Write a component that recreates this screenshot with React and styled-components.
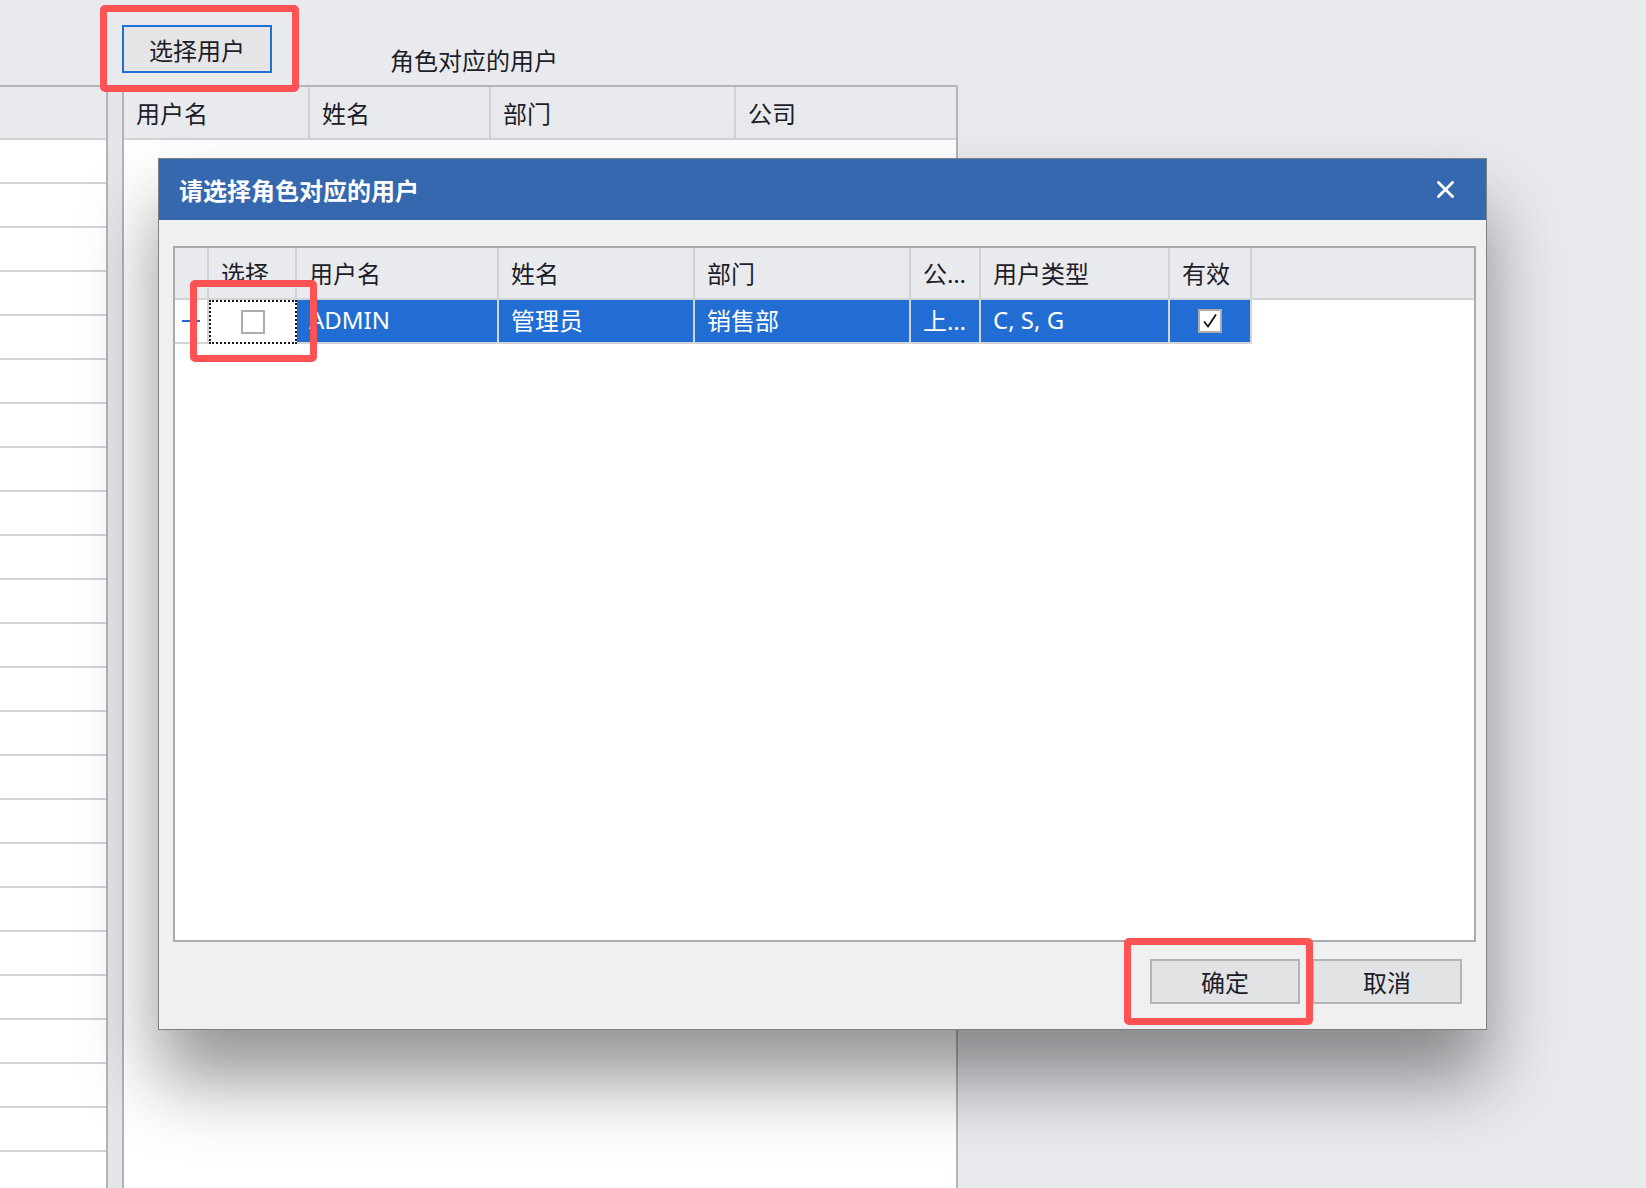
import React from "react";
import styled, { createGlobalStyle } from "styled-components";

const GlobalStyle = createGlobalStyle`
  html, body { margin: 0; padding: 0; }
  body {
    background: #e9eaee;
    font-family: "Noto Sans", "Noto Sans CJK SC", sans-serif;
  }
  *, *::before, *::after { box-sizing: border-box; }
`;

/* ---------- background window ---------- */

const Screen = styled.div`
  position: relative;
  width: 1646px;
  height: 1188px;
  overflow: hidden;
  background: #e9eaee;
  display: flex;
  flex-direction: column;
  color: #1d1d2a;
  font-size: 24px;
`;

const TopBar = styled.div`
  height: 85px;
  flex: none;
  display: flex;
  align-items: flex-start;
  padding-left: 122px;
`;

const PickButton = styled.button`
  margin-top: 25px;
  width: 150px;
  height: 48px;
  padding: 0;
  border: 2px solid #1f6fd8;
  background: #e5e5e7;
  color: #1d1d2a;
  font-family: inherit;
  font-size: 24px;
`;

const RoleLabel = styled.div`
  margin-left: 118px;
  margin-top: 49px;
  line-height: 24px;
  font-size: 24px;
  white-space: nowrap;
`;

const Workspace = styled.div`
  flex: 1;
  min-height: 0;
  display: flex;
  align-items: stretch;
`;

const SidePanel = styled.div`
  width: 106px;
  flex: none;
  background: #fff;
  border-top: 2px solid #b5b6b9;
  display: flex;
  flex-direction: column;
  overflow: hidden;
`;

const PanelHead = styled.div`
  height: 53px;
  flex: none;
  background: #e9eaed;
  border-bottom: 2px solid #d2d3d6;
`;

const PanelRow = styled.div`
  height: 44px;
  flex: none;
  border-bottom: 2px solid #d2d3d6;
`;

const Splitter = styled.div`
  width: 18px;
  flex: none;
  background: #e5e6ea;
  border-left: 2px solid #b3b4b7;
  border-right: 2px solid #b3b4b7;
`;

const MemberGrid = styled.div`
  width: 834px;
  flex: none;
  background: #fff;
  border-top: 2px solid #b5b6b9;
  border-right: 2px solid #b3b4b7;
  display: flex;
  flex-direction: column;
`;

const MemberHead = styled.div`
  height: 53px;
  display: grid;
  grid-template-columns: 186px 181px 245px 1fr;
  background: #e9eaed;
  border-bottom: 2px solid #d2d3d6;
`;

const MemberHeadCell = styled.div`
  display: flex;
  align-items: center;
  padding-left: 12px;
  border-right: ${(p) => (p.$last ? "none" : "2px solid #d2d3d6")};
  font-size: 24px;
  white-space: nowrap;
`;

/* ---------- dialog ---------- */

const Dialog = styled.div`
  position: absolute;
  left: 158px;
  top: 158px;
  width: 1329px;
  height: 872px;
  border: 1px solid #7e7f83;
  background: #f0f0f0;
  box-shadow: 0 50px 70px rgba(0, 0, 0, 0.42);
  display: flex;
  flex-direction: column;
  z-index: 2;
`;

const TitleBar = styled.div`
  height: 61px;
  flex: none;
  background: #3568ae;
  display: flex;
  align-items: center;
  justify-content: space-between;
  padding: 0 32px 0 20px;
`;

const Title = styled.div`
  color: #fff;
  font-size: 24px;
  font-weight: 700;
  white-space: nowrap;
`;

const CloseIcon = styled.svg`
  width: 17px;
  height: 17px;
  display: block;
`;

const DialogBody = styled.div`
  flex: 1;
  display: flex;
  flex-direction: column;
  padding: 26px 10px 25px 14px;
`;

const UserGrid = styled.div`
  height: 696px;
  flex: none;
  background: #fff;
  border: 2px solid #ababad;
  display: flex;
  flex-direction: column;
`;

const GridRow = styled.div`
  display: grid;
  grid-template-columns: 34px 88px 202px 196px 216px 70px 189px 82px 1fr;
  height: ${(p) => p.$height}px;
  flex: none;
`;

const HeadCell = styled.div`
  display: flex;
  align-items: center;
  min-width: 0;
  padding: 0 10px 1px 12px;
  background: #e9eaed;
  border-bottom: 2px solid #d2d3d6;
  border-right: ${(p) => (p.$filler ? "none" : "2px solid #d2d3d6")};
  font-size: 24px;
`;

const CellText = styled.span`
  display: block;
  min-width: 0;
  overflow: hidden;
  white-space: nowrap;
  text-overflow: ellipsis;
`;

const DataCell = styled.div`
  display: flex;
  align-items: center;
  justify-content: ${(p) => (p.$center ? "center" : "flex-start")};
  min-width: 0;
  padding: ${(p) => (p.$center ? "0" : "0 10px 4px 12px")};
  font-size: 24px;
  background: ${(p) => (p.$selected ? "#216dd4" : "#fff")};
  color: ${(p) => (p.$selected ? "#fff" : "#1d1d2a")};
  border-bottom: 2px solid #d3d4d7;
  border-right: 2px solid #d3d4d7;
`;

const FocusCell = styled.div`
  display: flex;
  align-items: center;
  justify-content: center;
  background: #fff;
  border: 2px dotted #1a1a1a;
`;

const RowHeadCell = styled.div`
  display: flex;
  align-items: center;
  background: #fff;
  border-bottom: 2px solid #d3d4d7;
  border-right: 2px solid #d3d4d7;
`;

const CurrentMark = styled.span`
  display: block;
  margin-left: 7px;
  width: 18px;
  height: 2px;
  background: #2069d2;
`;

const Filler = styled.div`
  background: #fff;
`;

const CheckBox = styled.span`
  width: 24px;
  height: 24px;
  flex: none;
  background: #fff;
  border: 2px solid #acacae;
  display: flex;
  align-items: center;
  justify-content: center;
`;

const Footer = styled.div`
  display: flex;
  justify-content: flex-end;
  gap: 12px;
  padding: 17px 14px 0 0;
`;

const DialogButton = styled.button`
  width: 150px;
  height: 45px;
  padding: 0;
  border: 2px solid #b4b4b6;
  background: #e2e3e5;
  color: #1d1d2a;
  font-family: inherit;
  font-size: 24px;
`;

/* ---------- annotation frames ---------- */

const Callout = styled.div`
  position: absolute;
  border: 7px solid #fd5354;
  border-radius: 5px;
  pointer-events: none;
  z-index: 5;
`;

const users = [
  {
    login: "ADMIN",
    name: "管理员",
    dept: "销售部",
    corp: "上海分公司",
    kind: "C, S, G",
    valid: true,
  },
];

function Tick() {
  return (
    <svg width="18" height="18" viewBox="0 0 18 18">
      <polyline
        points="3,9.5 7,14.5 15,2.5"
        fill="none"
        stroke="#111"
        strokeWidth="1.8"
        strokeLinejoin="miter"
      />
    </svg>
  );
}

export default function App() {
  const sideRows = Array.from({ length: 23 });
  const headers = ["选择", "用户名", "姓名", "部门", "公司", "用户类型", "有效"];

  return (
    <>
      <GlobalStyle />
      <Screen>
        <TopBar>
          <PickButton>选择用户</PickButton>
          <RoleLabel>角色对应的用户</RoleLabel>
        </TopBar>

        <Workspace>
          <SidePanel>
            <PanelHead />
            {sideRows.map((_, i) => (
              <PanelRow key={i} />
            ))}
          </SidePanel>
          <Splitter />
          <MemberGrid>
            <MemberHead>
              <MemberHeadCell>用户名</MemberHeadCell>
              <MemberHeadCell>姓名</MemberHeadCell>
              <MemberHeadCell>部门</MemberHeadCell>
              <MemberHeadCell $last>公司</MemberHeadCell>
            </MemberHead>
          </MemberGrid>
        </Workspace>

        <Dialog>
          <TitleBar>
            <Title>请选择角色对应的用户</Title>
            <CloseIcon viewBox="0 0 17 17">
              <path
                d="M1.5 1.5 L15.5 15.5 M15.5 1.5 L1.5 15.5"
                stroke="#fff"
                strokeWidth="2.8"
                strokeLinecap="square"
              />
            </CloseIcon>
          </TitleBar>

          <DialogBody>
            <UserGrid>
              <GridRow $height={52}>
                <HeadCell />
                {headers.map((h) => (
                  <HeadCell key={h}>
                    <CellText>{h}</CellText>
                  </HeadCell>
                ))}
                <HeadCell $filler />
              </GridRow>

              {users.map((u) => (
                <GridRow key={u.login} $height={44}>
                  <RowHeadCell>
                    <CurrentMark />
                  </RowHeadCell>
                  <FocusCell>
                    <CheckBox />
                  </FocusCell>
                  <DataCell $selected>
                    <CellText>{u.login}</CellText>
                  </DataCell>
                  <DataCell $selected>
                    <CellText>{u.name}</CellText>
                  </DataCell>
                  <DataCell $selected>
                    <CellText>{u.dept}</CellText>
                  </DataCell>
                  <DataCell $selected>
                    <CellText>{u.corp}</CellText>
                  </DataCell>
                  <DataCell $selected>
                    <CellText>{u.kind}</CellText>
                  </DataCell>
                  <DataCell $selected $center>
                    <CheckBox>{u.valid && <Tick />}</CheckBox>
                  </DataCell>
                  <Filler />
                </GridRow>
              ))}
            </UserGrid>

            <Footer>
              <DialogButton>确定</DialogButton>
              <DialogButton>取消</DialogButton>
            </Footer>
          </DialogBody>
        </Dialog>

        <Callout style={{ left: 100, top: 5, width: 199, height: 87 }} />
        <Callout style={{ left: 190, top: 280, width: 127, height: 82 }} />
        <Callout style={{ left: 1124, top: 938, width: 189, height: 87 }} />
      </Screen>
    </>
  );
}
